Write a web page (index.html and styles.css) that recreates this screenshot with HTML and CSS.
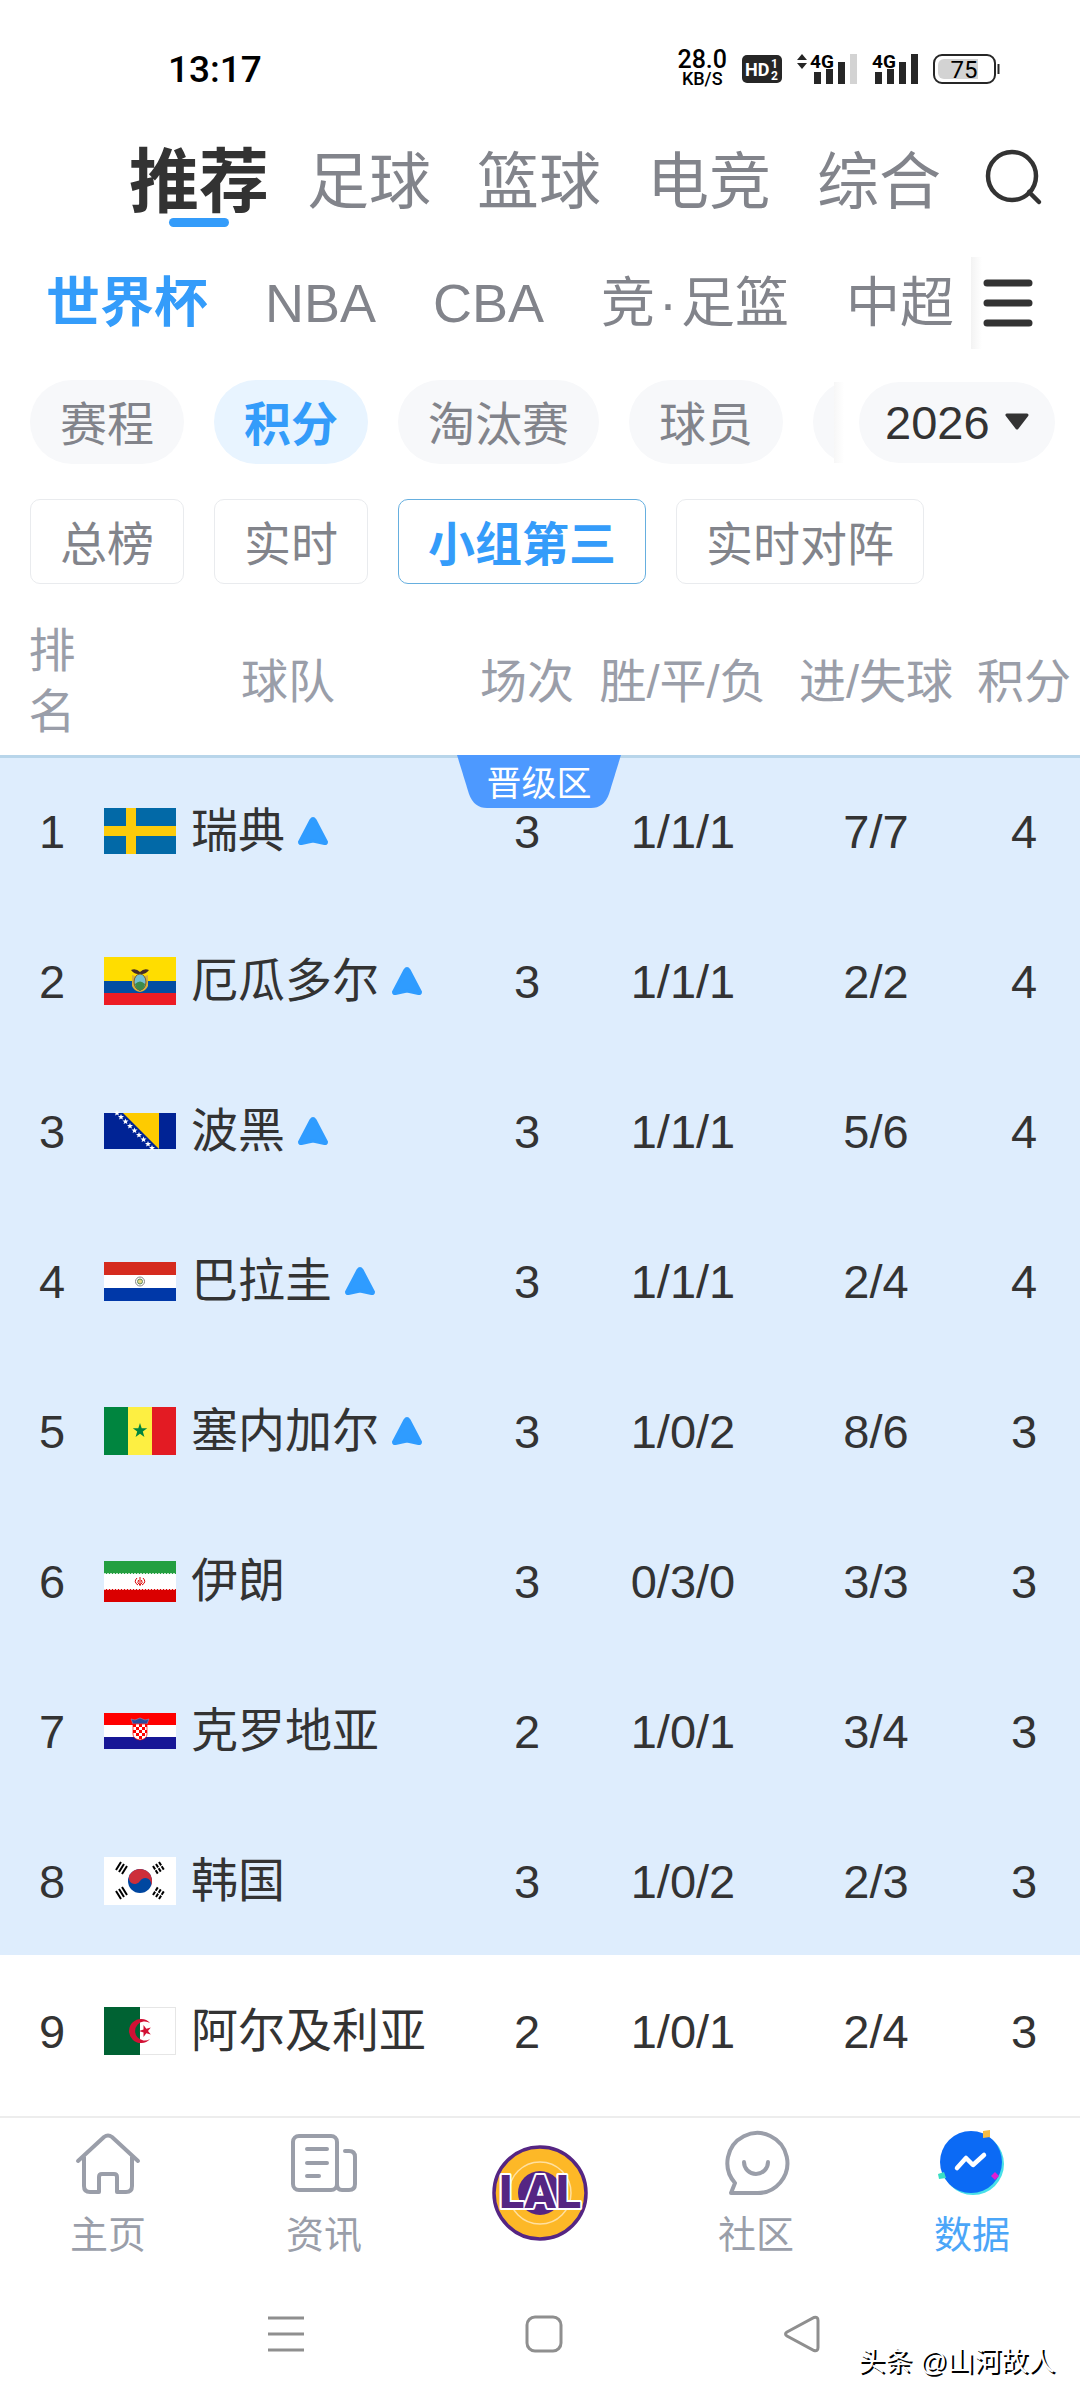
FILE: index.html
```html
<!DOCTYPE html>
<html lang="zh-CN">
<head>
    <meta charset="utf-8">
    <meta name="viewport" content="width=device-width, initial-scale=1">
    <title>世界杯 积分</title>
    <link rel="stylesheet" href="styles.css">
</head>
<body>
    <div class="status-bar">
        <span class="clock">13:17</span>
        <div class="status-icons">
            <div class="net-speed"><b>28.0</b><span>KB/S</span></div>
            <svg class="hd" width="40" height="28" viewBox="0 0 40 28">
                <rect width="40" height="28" rx="5" fill="#262626"/>
                <text x="3" y="21" font-size="18" fill="#fff">HD</text>
                <text x="29" y="13" font-size="12" fill="#fff">1</text>
                <text x="29" y="25" font-size="12" fill="#fff">2</text>
            </svg>
            <svg class="signal" width="60" height="34" viewBox="0 0 60 34">
                <path d="M0 8l5-6 5 6zM0 11l5 6 5-6z" fill="#262626"/>
                <text x="13" y="16" font-size="19">4G</text>
                <path d="M17 20h7v12h-7zM29 17h7v15h-7zM41 10h7v22h-7z" fill="#262626"/>
                <path d="M53 2h7v30h-7z" fill="#d3d3d3"/>
            </svg>
            <svg class="signal" width="46" height="34" viewBox="0 0 46 34">
                <text x="0" y="16" font-size="19">4G</text>
                <path d="M3 20h7v12H3zM15 17h7v15h-7zM27 10h7v22h-7zM39 2h7v30h-7z" fill="#262626"/>
            </svg>
            <svg class="battery" width="67" height="30" viewBox="0 0 67 30">
                <rect x="1" y="1" width="61" height="28" rx="8" fill="#fff" stroke="#262626" stroke-width="2"/>
                <path d="M11 5h34v20H11a6 6 0 0 1-6-6v-8a6 6 0 0 1 6-6z" fill="#d3d3d3"/>
                <path d="M65.500 10v10" stroke="#262626" stroke-width="2"/>
                <text x="31" y="24" font-size="24" text-anchor="middle">75</text>
            </svg>
        </div>
    </div>

    <header class="main-tabs">
        <nav class="tab-list">
            <a class="tab active" href="#">推荐</a>
            <a class="tab" href="#">足球</a>
            <a class="tab" href="#">篮球</a>
            <a class="tab" href="#">电竞</a>
            <a class="tab" href="#">综合</a>
        </nav>
        <button class="icon-btn" aria-label="搜索">
            <svg width="60" height="60" viewBox="0 0 60 60" fill="none" stroke="#333" stroke-width="4.500" stroke-linecap="round">
                <circle cx="29" cy="28" r="24"/>
                <path d="M46 44l10 10"/>
            </svg>
        </button>
    </header>

    <div class="league-bar">
        <nav class="league-list">
            <a class="league active" href="#">世界杯</a>
            <a class="league" href="#">NBA</a>
            <a class="league" href="#">CBA</a>
            <a class="league" href="#">竞<span class="dot">·</span>足篮</a>
            <a class="league" href="#">中超</a>
        </nav>
        <button class="menu-btn" aria-label="更多">
            <svg width="52" height="52" viewBox="0 0 52 52" stroke="#333" stroke-width="7" stroke-linecap="round">
                <path d="M5 6h42M5 26h42M5 46h42"/>
            </svg>
        </button>
    </div>

    <div class="filter-bar">
        <div class="pill-list">
            <button class="pill">赛程</button>
            <button class="pill active">积分</button>
            <button class="pill">淘汰赛</button>
            <button class="pill">球员</button>
            <button class="pill"></button>
        </div>
        <div class="year-wrap">
            <label class="year">
                <select aria-label="年份">
                    <option>2026</option>
                </select>
                <svg width="26" height="18" viewBox="0 0 26 18">
                    <path d="M3 2h20L13 15z" fill="#333" stroke="#333" stroke-width="3" stroke-linejoin="round"/>
                </svg>
            </label>
        </div>
    </div>

    <div class="chip-list">
        <button class="chip">总榜</button>
        <button class="chip">实时</button>
        <button class="chip active">小组第三</button>
        <button class="chip">实时对阵</button>
    </div>

    <main class="standings">
        <div class="zone-label">
            <svg viewBox="0 0 164 53">
                <path d="M0 0h164l-12 39q-5 14-18 14H30q-13 0-18-14z" fill="#4d99ff"/>
            </svg>
            <span>晋级区</span>
        </div>
        <table>
            <colgroup>
                <col class="c-rank">
                <col>
                <col class="c-played">
                <col class="c-wdl">
                <col class="c-goals">
                <col class="c-pts">
            </colgroup>
            <thead>
                <tr>
                    <th class="rank">排名</th>
                    <th>球队</th>
                    <th>场次</th>
                    <th>胜/平/负</th>
                    <th>进/失球</th>
                    <th>积分</th>
                </tr>
            </thead>
            <tbody class="qualified">
                <tr>
                    <td>1</td>
                    <td><div class="team">
                        <svg class="flag" width="72" height="46" viewBox="0 0 72 46">
                            <rect width="72" height="46" fill="#0269a7"/>
                            <path d="M22 0h10v46H22zM0 18h72v10H0z" fill="#fdcb0a"/>
                        </svg>瑞典<svg class="up" width="32" height="30" viewBox="0 0 32 30"><path d="M2.500 26L14 4q2-3 4 0l11.500 22q0 2-2 1.500L16 25 4.500 27.500q-2 .5-2-1.500z"/></svg>
                    </div></td>
                    <td>3</td><td>1/1/1</td><td>7/7</td><td>4</td>
                </tr>
                <tr>
                    <td>2</td>
                    <td><div class="team">
                        <svg class="flag" width="72" height="48" viewBox="0 0 72 48">
                            <rect width="72" height="48" fill="#ffdd00"/>
                            <path d="M0 24h72v12H0z" fill="#034ea2"/>
                            <path d="M0 36h72v12H0z" fill="#ed1c24"/>
                            <path d="M27 13q5-2 9 2 4-4 9-2-3 4-7 4h-4q-4 0-7-4z" fill="#452c25"/>
                            <path d="M28 18l3 1v11l5 4 5-4V19l3-1v11q-2 5-8 6-6-1-8-6z" fill="#d9b13b"/>
                            <ellipse cx="36" cy="25" rx="6" ry="8" fill="#75bfd0" stroke="#7a5a2a"/>
                            <path d="M31 27q5-5 10 0-1 6-5 6t-5-6z" fill="#3d8b4a"/>
                        </svg>厄瓜多尔<svg class="up" width="32" height="30" viewBox="0 0 32 30"><path d="M2.500 26L14 4q2-3 4 0l11.500 22q0 2-2 1.500L16 25 4.500 27.500q-2 .5-2-1.500z"/></svg>
                    </div></td>
                    <td>3</td><td>1/1/1</td><td>2/2</td><td>4</td>
                </tr>
                <tr>
                    <td>3</td>
                    <td><div class="team">
                        <svg class="flag" width="72" height="36" viewBox="0 0 72 36">
                            <rect width="72" height="36" fill="#002395"/>
                            <path d="M19 0h36v36z" fill="#fecb00"/>
                            <g fill="#fff">
                                <path id="star" d="M13 -3l.8 2 2.200.1-1.700 1.400.6 2.100L13 1.400l-1.900 1.200.6-2.100L10-.9l2.200-.1z"/>
                                <use href="#star" x="4" y="4"/>
                                <use href="#star" x="8.500" y="8.500"/>
                                <use href="#star" x="13" y="13"/>
                                <use href="#star" x="17.500" y="17.500"/>
                                <use href="#star" x="22" y="22"/>
                                <use href="#star" x="26.500" y="26.500"/>
                                <use href="#star" x="31" y="31"/>
                                <use href="#star" x="35" y="35"/>
                            </g>
                        </svg>波黑<svg class="up" width="32" height="30" viewBox="0 0 32 30"><path d="M2.500 26L14 4q2-3 4 0l11.500 22q0 2-2 1.500L16 25 4.500 27.500q-2 .5-2-1.500z"/></svg>
                    </div></td>
                    <td>3</td><td>1/1/1</td><td>5/6</td><td>4</td>
                </tr>
                <tr>
                    <td>4</td>
                    <td><div class="team">
                        <svg class="flag" width="72" height="39" viewBox="0 0 72 39">
                            <rect width="72" height="39" fill="#fff"/>
                            <path d="M0 0h72v13H0z" fill="#d52b1e"/>
                            <path d="M0 26h72v13H0z" fill="#0038a8"/>
                            <circle cx="36" cy="19.500" r="4.500" fill="#fff" stroke="#888"/>
                            <circle cx="36" cy="19.500" r="2.500" fill="#e5d98a" stroke="#5b8a5b"/>
                        </svg>巴拉圭<svg class="up" width="32" height="30" viewBox="0 0 32 30"><path d="M2.500 26L14 4q2-3 4 0l11.500 22q0 2-2 1.500L16 25 4.500 27.500q-2 .5-2-1.500z"/></svg>
                    </div></td>
                    <td>3</td><td>1/1/1</td><td>2/4</td><td>4</td>
                </tr>
                <tr>
                    <td>5</td>
                    <td><div class="team">
                        <svg class="flag" width="72" height="48" viewBox="0 0 72 48">
                            <path d="M0 0h24v48H0z" fill="#00853f"/>
                            <path d="M24 0h24v48H24z" fill="#fdef42"/>
                            <path d="M48 0h24v48H48z" fill="#e31b23"/>
                            <path d="M36 16l1.700 5.300h5.500l-4.400 3.300 1.600 5.300-4.400-3.200-4.400 3.200 1.600-5.300-4.400-3.300h5.500z" fill="#00853f"/>
                        </svg>塞内加尔<svg class="up" width="32" height="30" viewBox="0 0 32 30"><path d="M2.500 26L14 4q2-3 4 0l11.500 22q0 2-2 1.500L16 25 4.500 27.500q-2 .5-2-1.500z"/></svg>
                    </div></td>
                    <td>3</td><td>1/0/2</td><td>8/6</td><td>3</td>
                </tr>
                <tr>
                    <td>6</td>
                    <td><div class="team">
                        <svg class="flag" width="72" height="41" viewBox="0 0 72 41">
                            <rect width="72" height="41" fill="#fff"/>
                            <path d="M0 0h72v13H0z" fill="#239f40"/>
                            <path d="M0 28h72v13H0z" fill="#da0000"/>
                            <path d="M0 13h72M0 28h72" stroke="#fff" stroke-width="1.500" stroke-dasharray="2 1"/>
                            <path d="M33 17q-4 4 1 7M39 17q4 4-1 7M36 16v9M34.500 19q-2 3 1.500 5M37.500 19q2 3-1.500 5" fill="none" stroke="#da0000"/>
                        </svg>伊朗
                    </div></td>
                    <td>3</td><td>0/3/0</td><td>3/3</td><td>3</td>
                </tr>
                <tr>
                    <td>7</td>
                    <td><div class="team">
                        <svg class="flag" width="72" height="36" viewBox="0 0 72 36">
                            <rect width="72" height="36" fill="#fff"/>
                            <path d="M0 0h72v12H0z" fill="#f00"/>
                            <path d="M0 24h72v12H0z" fill="#171796"/>
                            <path d="M27 6l4 1 5-2 5 2 4-1-2 5H29z" fill="#2b4a9c" stroke="#8fa9d6" stroke-width=".5"/>
                            <path d="M29 11h14v10q0 5-7 6-7-1-7-6z" fill="#fff" stroke="#f00" stroke-width=".7"/>
                            <path d="M29 11h3v3h-3zM35 11h3v3h-3zM41 11h2v3h-2zM32 14h3v3h-3zM38 14h3v3h-3zM29 17h3v3h-3zM35 17h3v3h-3zM41 17h2v3h-2zM32 20h3v3h-3zM38 20h3v3h-3zM35 23h3v3h-3z" fill="#f00"/>
                        </svg>克罗地亚
                    </div></td>
                    <td>2</td><td>1/0/1</td><td>3/4</td><td>3</td>
                </tr>
                <tr>
                    <td>8</td>
                    <td><div class="team">
                        <svg class="flag" width="72" height="48" viewBox="0 0 72 48">
                            <rect width="72" height="48" fill="#fff"/>
                            <circle cx="36" cy="24" r="12" fill="#0047a0"/>
                            <path d="M24 24a12 12 0 0 1 24 0 6 6 0 0 0-12 0 6 6 0 0 1-12 0z" fill="#cd2e3a" transform="rotate(30 36 24)"/>
                            <g stroke="#000" stroke-width="2">
                                <path d="M12 13l5-8M15 15l5-8M18 17l5-8"/>
                                <path d="M49 9l5 8M52 7l5 8M55 5l5 8" stroke-dasharray="4 1"/>
                                <path d="M12 34l5 8M15 32l5 8M18 30l5 8"/>
                                <path d="M49 38l5-8M52 40l5-8M55 42l5-8" stroke-dasharray="4 1"/>
                            </g>
                        </svg>韩国
                    </div></td>
                    <td>3</td><td>1/0/2</td><td>2/3</td><td>3</td>
                </tr>
            </tbody>
            <tbody>
                <tr>
                    <td>9</td>
                    <td><div class="team">
                        <svg class="flag" width="72" height="48" viewBox="0 0 72 48">
                            <rect x=".5" y=".5" width="71" height="47" fill="#fff" stroke="#e6e6e6"/>
                            <path d="M0 0h36v48H0z" fill="#006233"/>
                            <path d="M46 16a12 12 0 1 0 0 16 9.600 9.600 0 1 1 0-16z" fill="#d21034"/>
                            <path d="M35 24l4.500-1.500V18l2.800 3.800 4.500-1.400L44 24l2.800 3.600-4.500-1.400-2.800 3.800v-4.500z" fill="#d21034"/>
                        </svg>阿尔及利亚
                    </div></td>
                    <td>2</td><td>1/0/1</td><td>2/4</td><td>3</td>
                </tr>
            </tbody>
        </table>
    </main>

    <footer>
        <nav class="bottom-nav">
            <a class="nav-item" href="#">
                <svg width="72" height="72" viewBox="0 0 72 72">
                    <path d="M6 32L32 8q4-3 8 0l26 24M12 28v29q0 6 6 6h9V48q0-3 3-3h12q3 0 3 3v15h9q6 0 6-6V28"/>
                </svg>
                主页
            </a>
            <a class="nav-item" href="#">
                <svg width="72" height="72" viewBox="0 0 72 72">
                    <rect x="5" y="7" width="44" height="54" rx="6"/>
                    <path d="M49 55q0 6 5 6h7q6 0 6-6V28q0-6-6-6h-4M19 20h20M19 34h20M19 47h12"/>
                </svg>
                资讯
            </a>
            <a class="nav-item" href="#" aria-label="湖人">
                <svg width="100" height="100" viewBox="0 0 100 100" class="team-logo">
                    <circle cx="50" cy="50" r="46" fill="#fdb827" stroke="#552583" stroke-width="3.500"/>
                    <circle cx="50" cy="50" r="31" fill="none" stroke="#ffe0a0" stroke-width="1.500"/>
                    <circle cx="50" cy="50" r="22" fill="#552583"/>
                    <text x="50" y="65" text-anchor="middle">LAL</text>
                </svg>
            </a>
            <a class="nav-item" href="#">
                <svg width="72" height="72" viewBox="0 0 72 72">
                    <path d="M36 64H11l4-10A30 30 0 1 1 36 64zM24 33a12 12 0 0 0 24 0"/>
                </svg>
                社区
            </a>
            <a class="nav-item active" href="#">
                <svg width="72" height="72" viewBox="0 0 72 72" class="data-icon">
                    <circle cx="37" cy="35" r="31" fill="#48e0e8"/>
                    <circle cx="35" cy="33" r="31" fill="#0b6af5"/>
                    <path d="M21 39l9-10 7 7 11-10" fill="none" stroke="#fff" stroke-width="4.500"/>
                    <path d="M47 2l7-1v7l-7 1z" fill="#f7bd45"/>
                    <path d="M2 45l6-2 2 6-7 1z" fill="#3adfc5"/>
                    <path d="M59 43l4 4-4 4-4-4z" fill="#e31bd4"/>
                </svg>
                数据
            </a>
        </nav>
        <div class="system-nav">
            <svg width="36" height="38" viewBox="0 0 36 38"><path d="M0 3h36M0 19h36M0 35h36"/></svg>
            <svg width="38" height="38" viewBox="0 0 38 38"><rect x="2" y="2" width="34" height="34" rx="8"/></svg>
            <svg width="36" height="38" viewBox="0 0 36 38"><path d="M3 17L30 2.500q4-1 4 3v27q0 4-4 3L3 21q-3-2 0-4z"/></svg>
        </div>
        <span class="watermark">头条 @山河故人</span>
    </footer>
</body>
</html>
```

FILE: styles.css
```css
* {
    box-sizing: border-box;
}

body {
    margin: 0;
    min-height: 100vh;
    display: flex;
    flex-direction: column;
    background: #fff;
    color: #333;
    font-family: "Liberation Sans", "Noto Sans CJK SC", sans-serif;
    font-size: 47px;
}

a {
    color: inherit;
    text-decoration: none;
}

button {
    margin: 0;
    padding: 0;
    border: none;
    background: none;
    color: inherit;
    font: inherit;
}

svg {
    display: block;
    flex-shrink: 0;
    overflow: visible;
}

/* status bar */
.status-bar {
    display: flex;
    justify-content: space-between;
    align-items: center;
    height: 142px;
    padding: 0 80px 4px 168px;
    font-family: Roboto, sans-serif;
    color: #000;
}

.clock {
    font-size: 37px;
    font-weight: 500;
}

.status-icons {
    display: flex;
    align-items: center;
    gap: 15px;
}

.status-icons text {
    font-family: Roboto, sans-serif;
    font-weight: 700;
}

.status-icons .battery text {
    font-weight: 400;
}

.net-speed {
    display: flex;
    flex-direction: column;
    align-items: center;
    font-size: 18px;
    font-weight: 500;
    line-height: 18px;
}

.net-speed b {
    font-size: 25px;
    font-weight: 500;
    line-height: 20px;
}

/* top tabs */
.main-tabs {
    display: flex;
    justify-content: space-between;
    height: 108px;
    padding: 0 37px 0 114px;
}

.tab-list {
    display: flex;
}

.tab {
    width: 170px;
    font-size: 62px;
    line-height: 82px;
    text-align: center;
    color: #82848b;
}

.tab.active {
    font-size: 70px;
    font-weight: 700;
    color: #333;
}

.tab.active::after {
    content: "";
    display: block;
    width: 60px;
    height: 9px;
    margin: -6px auto 0;
    border-radius: 5px;
    background: #349cfa;
}

.icon-btn {
    align-self: flex-start;
    padding-top: 6px;
}

/* league tabs */
.league-bar {
    display: flex;
    align-items: center;
    height: 106px;
}

.league-list {
    flex: 1;
    min-width: 0;
    display: flex;
    gap: 57px;
    padding-left: 46px;
    overflow: hidden;
    white-space: nowrap;
    font-size: 54px;
    line-height: 92px;
    color: #82848b;
}

.league.active {
    font-weight: 700;
    color: #349cfa;
}

.dot {
    padding: 0 4px;
}

.menu-btn {
    padding: 20px 46px 20px 11px;
    background: linear-gradient(to left, #fff 98px, #f3f3f3);
}

/* filters */
.filter-bar {
    display: flex;
    align-items: center;
    padding-top: 24px;
    font-family: "Noto Sans CJK SC", sans-serif;
}

.pill-list {
    flex: 1;
    min-width: 0;
    display: flex;
    gap: 30px;
    padding-left: 30px;
    overflow: hidden;
}

.pill {
    flex-shrink: 0;
    min-width: 154px;
    height: 84px;
    padding: 0 30px 2px;
    border-radius: 42px;
    background: #f7f8fa;
    line-height: 82px;
    color: #82848b;
}

.pill.active {
    background: #e8f4ff;
    font-weight: 700;
    color: #349cfa;
}

.year-wrap {
    padding: 0 25px;
    background: linear-gradient(to left, #fff 236px, #f7f7f7);
}

.year {
    display: flex;
    align-items: center;
    gap: 14px;
    height: 81px;
    padding: 0 25px 0 26px;
    border-radius: 41px;
    background: #f7f8fa;
}

.year select {
    appearance: none;
    padding: 0;
    border: none;
    background: none;
    font-family: "Liberation Sans", sans-serif;
    font-size: 47px;
    color: #333;
}

.chip-list {
    display: flex;
    gap: 30px;
    padding: 35px 30px 23px;
    font-family: "Noto Sans CJK SC", sans-serif;
}

.chip {
    padding: 0 29px 2px;
    border: 1px solid #e9ebee;
    border-radius: 10px;
    line-height: 81px;
    color: #82848b;
}

.chip.active {
    border-color: #66afdf;
    font-weight: 700;
    color: #349cfa;
}

/* standings */
.standings {
    position: relative;
    flex: 1;
}

table {
    width: 100%;
    table-layout: fixed;
    border-collapse: collapse;
}

.c-rank {
    width: 104px;
}

.c-played {
    width: 110px;
}

.c-wdl {
    width: 202px;
}

.c-goals {
    width: 184px;
}

.c-pts {
    width: 112px;
}

th {
    height: 148px;
    padding: 0;
    font-weight: 400;
    line-height: 61px;
    color: #9a9ea9;
    white-space: nowrap;
}

th.rank {
    padding: 0 28px;
    white-space: normal;
}

td {
    height: 150px;
    padding: 2px 0 0;
    text-align: center;
}

.qualified {
    background: #deedfd;
}

.qualified tr:first-child td {
    box-shadow: inset 0 3px #b8d5ea;
}

.team {
    display: flex;
    align-items: center;
    line-height: 60px;
    white-space: nowrap;
}

.flag {
    margin-right: 15px;
}

.up {
    margin-left: 12px;
    fill: #2f9cff;
    stroke: #2f9cff;
    stroke-width: 3px;
    stroke-linejoin: round;
}

/* label hanging from the top edge of the qualified zone */
.zone-label {
    position: absolute;
    top: 148px;
    left: 50%;
    width: 164px;
    margin-left: -83px;
    line-height: 52px;
    text-align: center;
    font-family: "Noto Sans CJK SC", sans-serif;
    font-size: 35px;
    color: #fff;
}

.zone-label svg {
    position: absolute;
    width: 100%;
}

.zone-label span {
    position: relative;
}

/* bottom bars */
footer {
    position: relative;
}

.bottom-nav {
    display: grid;
    grid-template-columns: repeat(5, 1fr);
    height: 152px;
    padding: 9px 0;
    border-top: 2px solid #ededed;
}

.nav-item {
    display: flex;
    flex-direction: column;
    align-items: center;
    justify-content: center;
    gap: 6px;
    font-family: "Noto Sans CJK SC", sans-serif;
    font-size: 38px;
    line-height: 50px;
    color: #9a9ea9;
}

.nav-item svg {
    fill: none;
    stroke: #9a9ea9;
    stroke-width: 4px;
    stroke-linecap: round;
    stroke-linejoin: round;
}

.nav-item.active {
    color: #4ba6f8;
}

.nav-item .data-icon,
.nav-item .team-logo {
    stroke: none;
}

.team-logo text {
    font-family: Roboto, sans-serif;
    font-size: 46px;
    font-weight: 900;
    fill: #552583;
    stroke: #fff;
    stroke-width: 4px;
    paint-order: stroke;
}

.system-nav {
    display: flex;
    justify-content: space-between;
    align-items: center;
    height: 132px;
    padding: 0 260px 0 268px;
}

.system-nav svg {
    fill: none;
    stroke: #8f8f8f;
    stroke-width: 3px;
}

.watermark {
    position: absolute;
    right: 25px;
    bottom: 18px;
    font-size: 27px;
    line-height: 40px;
    color: #fff;
    text-shadow: 2px 2px 0 #000;
}
```
